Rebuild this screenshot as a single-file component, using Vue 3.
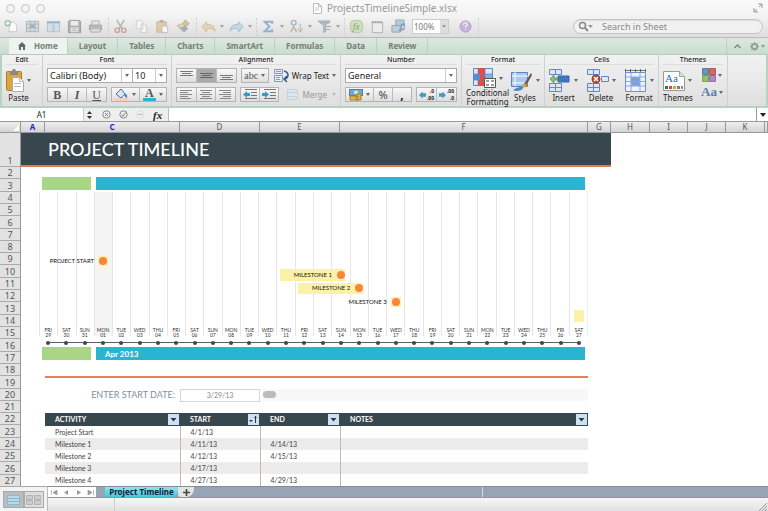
<script setup>
import { ref } from 'vue'

const tabs = ['Home', 'Layout', 'Tables', 'Charts', 'SmartArt', 'Formulas', 'Data', 'Review']
const activeTab = ref('Home')
const columns = ['A', 'C', 'D', 'E', 'F', 'G', 'H', 'I', 'J', 'K', '']
const rowNumbers = Array.from({ length: 27 }, (_, i) => i + 1)
const startDate = ref('3/29/13')
const scroll = ref(0)

const names = ['FRI', 'SAT', 'SUN', 'MON', 'TUE', 'WED', 'THU']
const days = Array.from({ length: 30 }, (_, i) => ({
  name: names[i % 7],
  date: String(i < 3 ? 29 + i : i - 2).padStart(2, '0'),
  today: i === 3
}))

const lanes = [
  { label: 'PROJECT START', from: 3, to: 3, dot: true },
  { label: 'MILESTONE 1', from: 13, to: 16, dot: true },
  { label: 'MILESTONE 2', from: 14, to: 17, dot: true },
  { label: 'MILESTONE 3', from: 19, to: 19, dot: true },
  { label: '', from: 29, to: 29, dot: false }
]
const span = (lane) => ({
  left: ((lane.from + 0.5) / 30) * 100 + '%',
  width: ((lane.to - lane.from) / 30) * 100 + '%'
})

const activities = [
  ['Project Start', '4/1/13', '', ''],
  ['Milestone 1', '4/11/13', '4/14/13', ''],
  ['Milestone 2', '4/12/13', '4/15/13', ''],
  ['Milestone 3', '4/17/13', '', ''],
  ['Milestone 4', '4/27/13', '4/29/13', '']
]
const headings = ['ACTIVITY', 'START', 'END', 'NOTES']
</script>

<template>
  <div class="window">
    <header class="titlebar">
      <div class="lights">
        <button aria-label="Close"></button><button aria-label="Minimize"></button><button aria-label="Zoom"></button>
      </div>
      <div class="title">
        <svg width="9" height="11" viewBox="0 0 9 11"><path d="M.5.500h5l3 3v7h-8zM5.500.500v3h3" fill="#fff" stroke="#bbb" /><path d="M2 5h4M2 7h4" stroke="#ccc" /></svg>
        <span>ProjectsTimelineSimple.xlsx</span>
      </div>
      <svg class="expand" width="12" height="12" viewBox="0 0 12 12" fill="none" stroke="#999"><path d="M6 2h4v4M10 2 7 5M2 6v4h4M2 10l3-3" /></svg>
    </header>

    <div class="toolbar">
      <div class="tools">
        <button aria-label="New"><svg viewBox="0 0 16 16"><path d="M5.500 3.500h5l3 3v7h-8z" fill="#fff" stroke="#c4c4c4" /><circle cx="4" cy="4.500" r="3.500" fill="#95bf99" /><path d="M4 2.500v4M2 4.500h4" stroke="#fff" stroke-width="1.500" /></svg></button>
        <button aria-label="Templates"><svg viewBox="0 0 16 16"><path d="M1.500 2.500h13v11h-13z" fill="#d8dcdf" stroke="#a4a7aa" /><path d="M1 5.500h14M5.500 3v10M10.500 3v10M2 9.500h12" stroke="#9ca5ad" /><path d="M6 6h4v3H6z" fill="#7aa6c5" /></svg></button>
        <button aria-label="Open"><svg viewBox="0 0 16 16"><path d="M1.500 3.500h6v10h-6zM8.500 3.500h6v10h-6z" fill="#cfdee8" stroke="#a3bfd1" /><path d="M1 3.500h14" stroke="#82a8c2" stroke-width="2" /></svg></button>
        <button aria-label="Save"><svg viewBox="0 0 16 16"><path d="M2.500 1.500h11l1 1v12h-13v-12z" fill="#a9a9a9" stroke="#8e8e8e" /><path d="M4 2h8v5H4zM4 9h8v5H4z" fill="#eee" /><path d="M5 10.500h6M5 12.500h6" stroke="#aaa" /></svg></button>
        <button aria-label="Print"><svg viewBox="0 0 16 16"><path d="M4 2h8v5H4z" fill="#e3e3e3" stroke="#aaa" /><path d="M1.500 6.500h13v5h-13z" fill="#b5b5b5" stroke="#999" /><path d="M3 10h10v4H3z" fill="#d9d9d9" stroke="#a6a6a6" /></svg></button>
      </div>
      <div class="tools">
        <button aria-label="Cut"><svg viewBox="0 0 16 16" fill="none"><path d="M4 1 10 11M12 1 6 11" stroke="#a9aaad" stroke-width="1.500" /><circle cx="4.500" cy="12" r="2.300" stroke="#c99794" stroke-width="1.500" /><circle cx="11.500" cy="12" r="2.300" stroke="#c99794" stroke-width="1.500" /></svg></button>
        <button aria-label="Copy"><svg viewBox="0 0 16 16" fill="#f5f5f5" stroke="#ccc"><path d="M2.500 1.500h5l2 2v7h-7zM7.500 5.500h4l2 2v7h-6z" /></svg></button>
        <button aria-label="Paste"><svg viewBox="0 0 16 16"><path d="M2 3h10v11H2z" fill="#dfc79c" stroke="#c5ab7e" /><path d="M5 1h4v3H5z" fill="#aaa" /><path d="M7.500 7.500h6v7h-6z" fill="#f7f7f7" stroke="#bbb" /></svg></button>
        <button aria-label="Format painter"><svg viewBox="0 0 16 16"><path d="m10 1 4 4-4 3-3-3z" fill="#d5bc82" stroke="#b39f73" /><path d="m1 7 6-2 5 5-4 4z" fill="#ead5aa" stroke="#c9b283" /><path d="M2 7q5 4 7-1l4 4-4 4z" fill="#94a6ba" /></svg></button>
      </div>
      <div class="tools">
        <button class="menu" aria-label="Undo"><svg viewBox="0 0 16 16"><path d="M1 8 6 3v3q8-1 9 7-4-5-9-2v3z" fill="#e3d4a7" stroke="#c5b68d" /></svg><i class="caret"></i></button>
        <button class="menu" aria-label="Redo"><svg viewBox="0 0 16 16"><path d="m15 8-5-5v3q-8-1-9 7 4-5 9-2v3z" fill="#bdd5e4" stroke="#91b5ce" /></svg><i class="caret"></i></button>
      </div>
      <div class="tools">
        <button class="menu" aria-label="AutoSum"><svg viewBox="0 0 16 16"><path d="M12 5V3H4l5 5-5 5h8v-2" fill="none" stroke="#88a9ca" stroke-width="2.200" /></svg><i class="caret"></i></button>
        <button class="menu" aria-label="Sort"><svg viewBox="0 0 16 16" fill="none"><circle cx="5" cy="4" r="2.500" stroke="#94aec7" stroke-width="1.500" /><path d="M2 14 5 8l3 6" stroke="#c0a993" stroke-width="1.500" /><path d="M12 5v8m-3-3 3 4 3-4" stroke="#aaa" /></svg><i class="caret"></i></button>
        <button class="menu" aria-label="Filter"><svg viewBox="0 0 16 16"><path d="M1 2h13L9 7v7H7V7z" fill="#a9bccc" stroke="#95a7b7" /><path d="M3 4h11M9 8h6M9 11h5" stroke="#999" /></svg><i class="caret"></i></button>
      </div>
      <div class="tools">
        <button aria-label="Formula builder"><svg viewBox="0 0 16 16"><rect x="1.500" y="1.500" width="13" height="13" rx="4" fill="#cbdcb9" stroke="#aac293" /><text x="4" y="11.500" font-size="9" font-style="italic" fill="#7c9d69">fx</text></svg></button>
        <button aria-label="Toolbox"><svg viewBox="0 0 16 16"><path d="M2.500 3.500h11v11h-11z" fill="#eee" stroke="#aaa" /><path d="M2 3.500h12" stroke="#999" stroke-width="2" stroke-dasharray="2 1" /></svg></button>
        <button aria-label="Media browser"><svg viewBox="0 0 16 16"><path d="M5 1h9v6H5z" fill="#a8c4d8" stroke="#86a5be" /><path d="M1 7h9v7H1z" fill="#b7cad7" stroke="#819bb0" /><path d="M11 12V6l3-1v6M11 12a1 1 0 1 1-1-1M14 11a1 1 0 1 1-1-1" fill="none" stroke="#63839e" /></svg></button>
        <div class="zoom"><select aria-label="Zoom level"><option>100%</option></select><b><i class="caret"></i></b></div>
      </div>
      <div class="tools">
        <button aria-label="Help"><svg viewBox="0 0 16 16"><circle cx="8" cy="8" r="6" fill="#c1aad2" stroke="#b295c9" /><path d="M6 6q0-2 2-2t2 2q0 1-2 2v1M8 11v1" fill="none" stroke="#fff" stroke-width="1.300" /></svg></button>
      </div>
      <div class="search">
        <svg width="16" height="11" viewBox="0 0 16 11"><circle cx="4.500" cy="4.500" r="3" fill="none" stroke="#888" stroke-width="1.500" /><path d="m7 7 3 3" stroke="#888" stroke-width="1.800" /><path d="M10 4h5l-2.500 3z" fill="#999" /></svg>
        <input type="search" aria-label="Search in Sheet" placeholder="Search in Sheet" />
      </div>
    </div>

    <nav class="tabs">
      <button v-for="tab in tabs" :key="tab" :class="{ active: tab === activeTab }" @click="activeTab = tab">
        <svg v-if="tab === 'Home'" width="8" height="8" viewBox="0 0 8 8"><path d="M4 0 0 4h1v4h2V5h2v3h2V4h1z" fill="#666" /></svg>{{ tab }}
      </button>
      <div class="tabtools">
        <button aria-label="Collapse ribbon"><svg width="9" height="7" viewBox="0 0 9 7"><path d="m1.500 5 3-3 3 3" fill="none" stroke="#888" stroke-width="1.500" /></svg></button>
        <button aria-label="Ribbon settings"><svg width="16" height="9" viewBox="0 0 16 9"><circle cx="4.500" cy="4.500" r="2.700" fill="none" stroke="#929b94" stroke-width="1.800" /><path d="M4.500 0v1.500M4.500 7.500V9M0 4.500h1.500M7.500 4.500H9M1.500 1.500l1 1M7.500 1.500l-1 1M1.500 7.500l1-1M7.500 7.500l-1-1" stroke="#929b94" /><path d="M11 3h4l-2 3z" fill="#999" /></svg></button>
      </div>
    </nav>

    <div class="ribbon">
      <section class="group edit">
        <h2>Edit</h2>
        <div class="bigs">
          <button class="big"><span><svg width="18" height="23" viewBox="0 0 18 23"><rect x=".5" y="2.500" width="15" height="19" rx="1" fill="#dba63e" stroke="#a87c2b" /><path d="M4 2h2l1-2h2l1 2h2v4H4z" fill="#888" /><path d="M6.500 8.500h7l4 4v10h-11z" fill="#fff" stroke="#aaa" /><path d="M13.500 8.500v4h4M8 14.500h7M8 17.500h7" fill="none" stroke="#bbb" /></svg><i class="caret"></i></span>Paste</button>
        </div>
      </section>

      <section class="group font">
        <h2>Font</h2>
        <div class="line">
          <div class="combo grow"><select aria-label="Font name"><option>Calibri (Body)</option></select><i class="caret"></i></div>
          <div class="combo size"><select aria-label="Font size"><option>10</option></select><i class="caret"></i></div>
        </div>
        <div class="line gap">
          <div class="seg w60"><button class="serif">B</button><button class="serif it">I</button><button class="serif un">U</button></div>
          <div class="seg w56">
            <button aria-label="Fill color"><svg width="15" height="13" viewBox="0 0 15 13"><path d="m2 6 5-5 4 5-4 4z" fill="#d9e5ef" stroke="#4b7196" /><path d="M10 5q4 1 3 5-2 0-3-4" fill="#4c88b8" /><path d="M1 11.500h13" stroke="#f2cfc0" stroke-width="3" /></svg><i class="caret"></i></button>
            <button class="serif" aria-label="Font color"><span class="inked">A</span><i class="caret"></i></button>
          </div>
        </div>
      </section>

      <section class="group align">
        <h2>Alignment</h2>
        <div class="line gap">
          <div class="seg w61">
            <button aria-label="Align top"><svg width="13" height="11" viewBox="0 0 13 11"><path d="M0 1.500h13M2 3.500h9M0 5.500h13" stroke="#777" /></svg></button>
            <button class="on" aria-label="Align middle"><svg width="13" height="11" viewBox="0 0 13 11"><path d="M0 3.500h13M2 5.500h9M0 7.500h13" stroke="#666" /></svg></button>
            <button aria-label="Align bottom"><svg width="13" height="11" viewBox="0 0 13 11"><path d="M0 5.500h13M2 7.500h9M0 9.500h13" stroke="#777" /></svg></button>
          </div>
          <div class="seg w28"><button class="abc">abc<i class="caret"></i></button></div>
          <button class="flat"><svg width="15" height="14" viewBox="0 0 15 14"><path d="M.5.500h8v4h-8zM.5 6.500h8v6h-8z" fill="#e6eef7" stroke="#7b9bc6" /><path d="M2 2.500h5M2 8.500h4M2 10.500h4" stroke="#ca8576" /><path d="M10 2q4 1 4 4t-3 4M13 7l-3 3 3 3" fill="none" stroke="#375b98" stroke-width="1.500" /></svg>Wrap Text<i class="caret"></i></button>
        </div>
        <div class="line gap">
          <div class="seg w61">
            <button aria-label="Align left"><svg width="12" height="11" viewBox="0 0 12 11"><path d="M0 1.500h12M0 3.500h8M0 5.500h12M0 7.500h8M0 9.500h11" stroke="#888" /></svg></button>
            <button aria-label="Center"><svg width="12" height="11" viewBox="0 0 12 11"><path d="M0 1.500h12M2 3.500h8M0 5.500h12M2 7.500h8M0 9.500h12" stroke="#888" /></svg></button>
            <button aria-label="Align right"><svg width="12" height="11" viewBox="0 0 12 11"><path d="M0 1.500h12M4 3.500h8M0 5.500h12M4 7.500h8M1 9.500h11" stroke="#888" /></svg></button>
          </div>
          <div class="seg w40">
            <button aria-label="Decrease indent"><svg width="14" height="11" viewBox="0 0 14 11"><path d="M2 .5h12M8 3.500h6M8 6.500h6M2 9.500h12" stroke="#777" /><path d="M0 5.500 4 2v2h3v3H4v2z" fill="#3f97c9" /></svg></button>
            <button aria-label="Increase indent"><svg width="14" height="11" viewBox="0 0 14 11"><path d="M2 .5h12M8 3.500h6M8 6.500h6M2 9.500h12" stroke="#777" /><path d="M7 5.500 3 2v2H0v3h3v2z" fill="#3f97c9" /></svg></button>
          </div>
          <button class="flat dim"><svg width="11" height="11" viewBox="0 0 11 11"><path d="M.5.500h10v10H.5zM0 3.500h11M0 7.500h11" fill="#dbe6ed" stroke="#c2d2dc" /></svg>Merge<i class="caret"></i></button>
        </div>
      </section>

      <section class="group number">
        <h2>Number</h2>
        <div class="line"><div class="combo grow"><select aria-label="Number format"><option>General</option></select><i class="caret"></i></div></div>
        <div class="line gap">
          <div class="seg w67">
            <button class="wide" aria-label="Currency"><svg width="14" height="13" viewBox="0 0 14 13"><rect x=".5" y="1.500" width="13" height="6" fill="#71a9cd" stroke="#4c81a8" /><circle cx="7" cy="4.500" r="2" fill="#d6e9f4" /><path d="M1 8h8v4H1zM7 6h5v6H7z" fill="#e3b84a" stroke="#a57f29" /></svg><i class="caret"></i></button>
            <button class="pct">%</button><button class="comma">,</button>
          </div>
          <div class="seg w41">
            <button class="dec" aria-label="Increase decimal"><svg width="7" height="8" viewBox="0 0 8 8"><path d="M0 4 4 0v2h4v4H4v2z" fill="#4797c5" /></svg><span>.0<br />.00</span></button>
            <button class="dec" aria-label="Decrease decimal"><svg width="7" height="8" viewBox="0 0 8 8"><path d="M8 4 4 0v2H0v4h4v2z" fill="#4797c5" /></svg><span>.00<br />.0</span></button>
          </div>
        </div>
      </section>

      <section class="group format">
        <h2>Format</h2>
        <div class="bigs">
          <button class="big two"><span><svg width="23" height="20" viewBox="0 0 23 20"><path d="M.5.500h19v17h-19z" fill="#dbe7f8" stroke="#6688bd" /><path d="M5 0h7v18H5z" fill="#e34c43" /><path d="M0 6h7v6H0z" fill="#568ed3" /><path d="M12 6h7v6h-7z" fill="#86afe3" /><path d="M0 6h20M0 12h20M5 0v18M12 0v18" stroke="#6485b7" stroke-width=".7" /><path d="M11.500 10.500h11v9h-11z" fill="#fff" stroke="#555" /><path d="M13 13h3m2 0h3M13 17h3m2 0h3" stroke="#444" /></svg><i class="caret"></i></span>Conditional<br />Formatting</button>
          <button class="big"><span><svg width="23" height="22" viewBox="0 0 23 22"><path d="M1.500 2.500h16v14h-16z" fill="#a9c9f1" stroke="#5d82bb" /><path d="M2 6h16M2 13h16M5 2v14" stroke="#fff" /><path d="m21 3-7 11 2 2 6-11z" fill="#76563a" /><path d="m14 13-3 5 5-1 1-2z" fill="#d79d32" /><path d="M3 20q7-4 10-3 0 4-7 4z" fill="#4b83cd" /></svg><i class="caret"></i></span>Styles</button>
        </div>
      </section>

      <section class="group cells">
        <h2>Cells</h2>
        <div class="bigs">
          <button class="big"><span><svg width="22" height="23" viewBox="0 0 22 23"><path d="M.5.500h6v5h-6zM6.500.500h6v5h-6zM.5 14.500h6v4h-6zM6.500 14.500h6v4h-6zM.5 18.500h6v4h-6zM6.500 18.500h6v4h-6z" fill="#dce7f9" stroke="#6486c1" /><path d="M9 7h11v6H9z" fill="#3f76c5" stroke="#3867a9" /><path d="M5 6 1 10l4 4v-3h4V9H5z" fill="#7cc878" stroke="#458e44" stroke-width=".7" /></svg><i class="caret"></i></span>Insert</button>
          <button class="big"><span><svg width="22" height="23" viewBox="0 0 22 23"><path d="M.5.500h6v5h-6zM6.500.500h6v5h-6zM.5 14.500h6v4h-6zM6.500 14.500h6v4h-6zM.5 18.500h6v4h-6zM6.500 18.500h6v4h-6zM14.500 7.500h7v5h-7z" fill="#dce7f9" stroke="#6486c1" /><circle cx="9" cy="10" r="4" fill="#c05138" stroke="#983921" /><path d="m7 8 4 4M11 8l-4 4" stroke="#fff" stroke-width="1.400" /></svg><i class="caret"></i></span>Delete</button>
          <button class="big"><span><svg width="23" height="23" viewBox="0 0 23 23"><path d="M1.500 3.500h20v19h-20z" fill="#eef3fc" stroke="#6c8fce" /><path d="M7 8h9v9H7z" fill="#7ba0e0" /><path d="M2 8h19M2 12.500h19M2 17h19M7 4v18M16 4v18" stroke="#8da9dc" /><path d="M1 1.500h21M1.500 0v3M6.500 0v3M11.500 0v3M16.500 0v3M21.500 0v3" stroke="#444" stroke-width=".7" /></svg><i class="caret"></i></span>Format</button>
        </div>
      </section>

      <section class="group themes">
        <h2>Themes</h2>
        <div class="bigs">
          <button class="big"><span><svg width="22" height="20" viewBox="0 0 22 20"><path d="M.5.500h16l5 5v14h-21z" fill="#fff" stroke="#999" /><path d="M16.500.500v5h5" fill="#dbe6ca" stroke="#9aaa88" /><text x="2" y="11" font-size="11" font-family="Liberation Serif" fill="#3569a9">Aa</text><path d="M2 15h3v3H2z" fill="#50637e" /><path d="M6 15h3v3H6z" fill="#d64c45" /><path d="M10 15h3v3h-3z" fill="#e39d32" /><path d="M14 15h3v3h-3z" fill="#8a6fb2" /><path d="M18 15h2v3h-2z" fill="#70a844" /></svg><i class="caret"></i></span>Themes</button>
          <div class="stack">
            <button aria-label="Theme colors"><svg width="14" height="14" viewBox="0 0 14 14"><path d="M.5.500h6v6h-6z" fill="#7095b9" stroke="#587c9f" /><path d="M7.500.500h6v6h-6z" fill="#d46a69" stroke="#b35757" /><path d="M.5 7.500h6v6h-6z" fill="#8dc568" stroke="#73a553" /><path d="M7.500 7.500h6v6h-6z" fill="#b486cb" stroke="#9568ad" /></svg><i class="caret"></i></button>
            <button aria-label="Theme fonts"><span class="aa">Aa</span><i class="caret"></i></button>
          </div>
        </div>
      </section>
    </div>

    <div class="formula">
      <input class="cellname" aria-label="Name box" value="A1" />
      <svg class="step" width="5" height="8" viewBox="0 0 5 8"><path d="M0 3 2.500 0 5 3zM0 5h5L2.500 8z" fill="#333" /></svg>
      <div class="fxtools">
        <button aria-label="Cancel"><svg width="9" height="9" viewBox="0 0 9 9"><circle cx="4.500" cy="4.500" r="3.700" fill="none" stroke="#888" /><path d="m3 3 3 3M6 3 3 6" stroke="#888" /></svg></button>
        <button aria-label="Enter"><svg width="9" height="9" viewBox="0 0 9 9"><circle cx="4.500" cy="4.500" r="3.700" fill="none" stroke="#888" /><path d="m2.500 4.500 1.500 2 2.500-4" fill="none" stroke="#888" /></svg></button>
        <button aria-label="More"><svg width="9" height="9" viewBox="0 0 9 9"><circle cx="4.500" cy="4.500" r="3.700" fill="none" stroke="#ddd" /><path d="M2 4.500h5" stroke="#bbb" /></svg></button>
        <button class="fx">fx</button>
      </div>
      <input class="entry" aria-label="Formula" />
      <button class="drop" aria-label="Expand formula bar"><i class="caret dark"></i></button>
    </div>

    <div class="colheads">
      <div class="corner"><svg width="6" height="6" viewBox="0 0 6 6"><path d="M6 0v6H0z" fill="#fff" /></svg></div>
      <div v-for="(c, i) in columns" :key="i" :class="{ sel: i < 2 }">{{ c }}</div>
    </div>

    <main class="sheet">
      <div class="rownums"><div v-for="n in rowNumbers" :key="n"><span>{{ n }}</span></div></div>
      <h1 class="banner">PROJECT TIMELINE</h1>

      <div class="chart">
        <div class="bars"><div class="prev"></div><div class="month"></div></div>
        <div class="plot">
          <div class="stripes"><div v-for="(d, i) in days" :key="i" :class="{ today: d.today }"></div></div>
          <div class="lanes">
            <div v-for="(lane, i) in lanes" :key="i" class="lane">
              <div class="span" :class="{ point: lane.from === lane.to, block: !lane.dot }" :style="span(lane)">
                <span>{{ lane.label }}</span><i v-if="lane.dot" class="dot"></i>
              </div>
            </div>
          </div>
          <div class="days"><div v-for="(d, i) in days" :key="i">{{ d.name }}<br />{{ d.date }}</div></div>
        </div>
        <div class="axis"><i v-for="(d, i) in days" :key="i"></i></div>
        <div class="bars"><div class="prev"></div><div class="month">Apr 2013</div></div>
      </div>

      <hr class="rule" />
      <label class="datelabel" for="start">ENTER START DATE:</label>
      <input id="start" v-model="startDate" class="dateinput" type="text" />
      <input v-model="scroll" class="slider" type="range" aria-label="Scroll timeline" />

      <div class="tablebox">
        <table>
          <thead>
            <tr>
              <th v-for="(h, i) in headings" :key="h"><div>{{ h }}<button :aria-label="'Filter ' + h"><svg width="9" height="9" viewBox="0 0 9 9"><path v-if="i !== 1" d="M1.500 3h6l-3 3.500z" fill="#263842" /><path v-else d="M0 5h4L2 7zM6 1h1v7H6zM5 3l1.500-2L8 3z" fill="#263842" /></svg></button></div></th>
            </tr>
          </thead>
          <tbody>
            <tr v-for="row in activities" :key="row[0]"><td v-for="(cell, i) in row" :key="i">{{ cell }}</td></tr>
          </tbody>
        </table>
      </div>
    </main>

    <footer>
      <div class="views">
        <button class="on" aria-label="Normal view"><svg width="13" height="10" viewBox="0 0 13 10"><path d="M.5.500h12v9H.5zM1 3.500h11M1 6.500h11" fill="#b9d9e8" stroke="#8db9cd" /></svg></button>
        <button aria-label="Page layout view"><svg width="15" height="10" viewBox="0 0 15 10"><path d="M.5.500h6v4h-6zM8.500.500h6v4h-6zM.5 5.500h6v4h-6zM8.500 5.500h6v4h-6z" fill="#ccc" stroke="#b4b4b4" /></svg></button>
      </div>
      <div class="bottom">
        <div class="sheets">
          <div class="nav">
            <button aria-label="First sheet"><svg width="7" height="5" viewBox="0 0 7 5"><path d="M.5 0v5M6 0 2 2.500 6 5z" fill="#999" stroke="#999" stroke-width=".7" /></svg></button>
            <button aria-label="Previous sheet"><svg width="7" height="5" viewBox="0 0 7 5"><path d="M5 0 1 2.500 5 5z" fill="#999" /></svg></button>
            <button aria-label="Next sheet"><svg width="7" height="5" viewBox="0 0 7 5"><path d="m2 0 4 2.500L2 5z" fill="#999" /></svg></button>
            <button aria-label="Last sheet"><svg width="7" height="5" viewBox="0 0 7 5"><path d="M6.500 0v5M1 0l4 2.500L1 5z" fill="#999" stroke="#999" stroke-width=".7" /></svg></button>
          </div>
          <button class="tab">Project Timeline</button>
          <button class="add" aria-label="Add sheet"><svg width="7" height="7" viewBox="0 0 7 7"><path d="M3.500 0v7M0 3.500h7" stroke="#444" stroke-width="1.600" /></svg></button>
          <div class="track"></div>
        </div>
        <div class="status"><div></div><svg width="8" height="8" viewBox="0 0 8 8"><path d="M0 8 8 0M3 8l5-5M6 8l2-2" stroke="#999" /></svg></div>
      </div>
    </footer>
  </div>
</template>

<style>
body { margin: 0; }
</style>

<style scoped>
* { box-sizing: border-box; }
.window { height: 100vh; display: flex; flex-direction: column; overflow: hidden; background: #fff; font-family: "Noto Sans", sans-serif; font-size: 8px; line-height: 10px; color: #222; }
button, input, select { font: inherit; color: inherit; border: 0; padding: 0; margin: 0; background: none; border-radius: 0; outline: 0; }
button { display: flex; align-items: center; justify-content: center; white-space: nowrap; }
select { appearance: none; }
svg { flex: none; display: block; }
.caret { width: 0; height: 0; flex: none; border: 2px solid transparent; border-top: 3px solid #666; border-bottom: 0; }
.caret.dark { border-top-color: #222; }

.titlebar { flex: none; height: 16px; display: flex; align-items: center; justify-content: space-between; padding: 0 4px 0 6px; background: linear-gradient(#fafafa, #f3f3f3); }
.lights { display: flex; gap: 6px; width: 60px; }
.lights button { width: 9px; height: 9px; border-radius: 50%; border: 1px solid #c2c2c2; background: #f4f4f4; }
.title { display: flex; align-items: center; gap: 5px; font-size: 10px; color: #999; }
.expand { margin-left: 48px; }

.toolbar { flex: none; height: 22px; display: flex; align-items: center; background: linear-gradient(#f3f3f3, #dedede); border-bottom: 1px solid #bbb; padding: 0 5px 0 1px; }
.tools { display: flex; align-items: center; padding-right: 2px; margin-right: 1px; border-right: 1px dotted #ccc; }
.tools:nth-of-type(5) { border: 0; }
.tools button { width: 21px; height: 18px; opacity: .85; }
.tools button svg { width: 15px; height: 15px; }
.tools .menu { width: 28px; gap: 4px; }
.tools .caret { border-top-color: #999; }
.zoom { display: flex; width: 37px; height: 15px; margin: 0 3px; border: 1px solid #ccc; background: #fff; color: #777; }
.zoom select { width: 27px; height: 13px; line-height: 13px; padding-left: 1px; font-size: 8px; }
.zoom b { flex: 1; display: flex; align-items: center; justify-content: center; background: #ddd; }
.search { margin-left: auto; width: 190px; height: 15px; border: 1px solid #c4c4c4; border-radius: 8px; display: flex; align-items: center; background: #f1f1f1; padding-left: 4px; box-shadow: inset 0 1px 1px #ddd; }
.search input { flex: 1; min-width: 0; padding-left: 8px; font-size: 9px; }
.search input::placeholder { color: #888; opacity: 1; }

.tabs { flex: none; height: 17px; display: flex; background: linear-gradient(#dce8de, #c9ddcf); border-bottom: 1px solid #b5ccbb; padding-left: 9px; font-weight: 700; color: #777d78; }
.tabs > button { padding: 0 11px; border-right: 1px solid #bcd2c2; gap: 8px; }
.tabs > .active { padding: 0 9px; background: #edf3ee; }
.tabtools { margin-left: auto; display: flex; width: 42px; border-left: 1px solid #bdd0c2; }
.tabtools button { flex: 1; }

.ribbon { flex: none; height: 53px; display: flex; background: linear-gradient(#f2f2f2, #dfdfdf); border: solid #b8d2c0; border-width: 0 2px 2px; }
.group { flex: none; border-right: 1px solid #d0d0d0; padding: 0 4px; }
.group h2 { margin: 0 0 3px; height: 10px; font-size: 7px; line-height: 10px; font-weight: 500; text-align: center; border-bottom: 1px solid #ddd; }
.edit { width: 41px; }
.font { width: 129px; }
.align { width: 169px; }
.number { width: 121px; }
.format { width: 83px; }
.cells { width: 114px; }
.themes { width: 69px; }
.line { display: flex; height: 16px; margin-bottom: 3px; }
.line.gap { gap: 4px; }
.combo { display: flex; align-items: center; background: #fff; border: 1px solid #aaa; height: 15px; padding-right: 3px; }
.combo select { flex: 1; min-width: 0; height: 13px; line-height: 13px; padding-left: 2px; font-size: 9px; border-right: 1px solid #ccc; margin-right: 3px; }
.grow { flex: 1; }
.size { width: 35px; margin-left: -1px; }
.seg { display: flex; height: 15px; border: 1px solid #b4b4b4; background: linear-gradient(#f8f8f8, #dedede); }
.seg button { flex: 1; gap: 3px; }
.seg button + button { border-left: 1px solid #bbb; }
.seg .on { background: #aaa; }
.w60 { width: 60px; }
.w56 { width: 56px; }
.w61 { width: 61px; }
.w28 { width: 28px; }
.w40 { width: 40px; }
.w67 { width: 67px; }
.w41 { width: 41px; }
.seg .wide { flex: 0 0 27px; }
.serif { font-family: "Liberation Serif", serif; font-size: 12px; font-weight: 700; color: #555; }
.it { font-style: italic; }
.un { text-decoration: underline; font-weight: 400; }
.inked { border-bottom: 3px solid #2fb0cc; width: 13px; line-height: 9px; }
.abc { font-family: "Liberation Serif", serif; font-size: 10px; color: #555; }
.flat { gap: 3px; margin-left: 1px; height: 15px; }
.dim { color: #999; gap: 5px; margin-left: 4px; }
.dim .caret { border-top-color: #bbb; }
.pct { font-size: 11px; color: #444; }
.comma { font-weight: 700; font-size: 12px; }
.dec { font-size: 5px; line-height: 7px; font-weight: 700; text-align: right; }
.seg .dec { gap: 1px; }
.bigs { display: flex; justify-content: space-between; }
.big { flex-direction: column; justify-content: flex-start; line-height: 10px; }
.big > span { display: flex; align-items: center; gap: 3px; height: 25px; }
.two > span { height: 20px; }
.two { line-height: 9px; font-size: 8px; }
.stack { display: flex; flex-direction: column; gap: 5px; }
.stack button { gap: 2px; }
.aa { font-family: "Liberation Serif", serif; font-size: 13px; font-weight: 700; color: #557fae; }

.formula { flex: none; height: 14px; display: flex; align-items: center; background: #eee; border-bottom: 1px solid #999; }
.cellname { width: 84px; height: 13px; background: #fff; text-align: center; border-right: 1px solid #ccc; }
.step { margin: 0 10px 0 3px; }
.fxtools { display: flex; gap: 8px; width: 66px; }
.fx { font-family: "Liberation Serif", serif; font-size: 11px; font-weight: 700; font-style: italic; }
.entry { flex: 1; height: 13px; background: #fff; border-left: 1px solid #bbb; }
.drop { width: 12px; height: 13px; background: #fff; border-left: 1px solid #999; }
.drop .caret { border-width: 4px 3px 0; }

.colheads { flex: none; height: 11px; display: grid; grid-template-columns: 21px 24px 135px 80px 80px 1fr 23px 39px 38px 38px 39px 3px; background: linear-gradient(#eee, #d4d4d4); border-bottom: 1px solid #999; color: #555; }
.colheads div { text-align: center; line-height: 10px; border-right: 1px solid #999; }
.colheads .sel { color: #2a1fd0; font-weight: 700; }
.colheads .corner { display: flex; justify-content: flex-end; align-items: flex-end; padding: 1px; }

.sheet { flex: 1; min-height: 0; margin-bottom: -1px; display: grid; grid-template-columns: 21px 24px 135px 80px 80px 1fr 23px 39px 38px 38px 39px 3px; grid-template-rows: 34px repeat(26, minmax(0, 1fr)); font-family: Lato, sans-serif; font-size: 7px; }
.rownums { grid-area: 1 / 1 / -1 / 2; display: grid; grid-template-rows: 34px repeat(26, minmax(0, 1fr)); font-family: "Noto Sans", sans-serif; font-size: 9px; color: #555; background: #e2e2e2; border-right: 1px solid #999; }
.rownums div { display: flex; align-items: flex-end; justify-content: center; border-bottom: 1px solid #aaa; min-height: 0; line-height: 11px; }
.banner { grid-area: 1 / 2 / 2 / 8; margin: 0; padding-left: 27px; background: #38464d; border-bottom: 2px solid #e87650; color: #fff; font-size: 18px; line-height: 32px; font-weight: 500; }
.chart { grid-area: 2 / 2 / 18 / 7; padding: 10px 0 4px 18px; display: flex; flex-direction: column; }
.bars { flex: none; height: 13px; display: flex; gap: 5px; padding: 0 3px; }
.prev { width: 49px; background: #a9d684; }
.month { flex: 1; background: #29b5d2; color: #fff; font-weight: 700; font-size: 8px; line-height: 15px; padding-left: 9px; }
.plot { flex: 1; position: relative; display: flex; flex-direction: column; }
.stripes { position: absolute; inset: 2px 0 3px; display: grid; grid-template-columns: repeat(30, 1fr); border-right: 1px solid #eee; }
.stripes div { border-left: 1px solid #e6e6e6; }
.stripes .today { background: #f4f4f4; }
.lanes { position: relative; flex: 1; padding: 64px 0 5px; display: flex; flex-direction: column; }
.lane { flex: 1; position: relative; }
.span { position: absolute; top: 1px; bottom: 1px; display: flex; align-items: center; justify-content: flex-end; white-space: nowrap; color: #111; font-size: 6px; }
.span::before { content: ""; position: absolute; inset: 0 -4px 0 -6px; background: #fcf1a6; }
.span.point::before { inset: 1px -5px; }
.span.block::before { inset: 0 -5px; }
.span span { position: relative; margin-right: 9px; }
.dot { position: absolute; right: -4px; width: 8px; height: 8px; border-radius: 50%; background: #f8853c; }
.days { position: relative; display: grid; grid-template-columns: repeat(30, 1fr); height: 11px; font-size: 5px; line-height: 5px; text-align: center; color: #333; }
.axis { flex: none; height: 8px; display: grid; grid-template-columns: repeat(30, 1fr); align-items: center; justify-items: center; background: linear-gradient(#566169, #566169) 9px 50% / calc(100% - 18px) 1px no-repeat; }
.axis i { width: 4px; height: 4px; border-radius: 50%; background: #3c474e; }
.rule { grid-area: 19 / 3 / 20 / 7; margin: 0; border: 0; width: 100%; height: 2px; background: #e8805f; align-self: start; }
.datelabel { grid-area: 20 / 2 / 21 / 4; align-self: center; text-align: right; padding-right: 5px; color: #7c919f; font-size: 9px; }
.dateinput { grid-area: 20 / 4 / 21 / 5; width: 100%; height: 13px; border: 1px solid #d5d5d5; text-align: center; color: #888; }
.slider { grid-area: 20 / 5 / 21 / 7; appearance: none; width: calc(100% - 2px); height: 12px; margin-left: 2px; padding-left: 1px; background: #f7f7f7; }
.slider::-webkit-slider-thumb { appearance: none; width: 13px; height: 7px; border-radius: 4px; background: #bbb; }
.tablebox { grid-area: 22 / 3 / 28 / 7; min-height: 0; }
table { width: 100%; border-collapse: collapse; table-layout: fixed; line-height: 9px; color: #444; }
th:nth-child(1) { width: 135px; }
th:nth-child(2), th:nth-child(3) { width: 80px; }
th, td { padding: 0 0 0 10px; text-align: left; }
th { height: 13px; background: #38464d; color: #fff; font-size: 7px; }
th div { display: flex; align-items: center; justify-content: space-between; }
th button { width: 11px; height: 11px; margin-right: 1px; background: #cde1f2; }
td { height: 12px; border-right: 1px solid #bbb; }
td:last-child { border: 0; }
tbody tr:nth-child(even) { background: #eeebeb; }

footer { flex: none; height: 25px; display: flex; position: relative; background: #eee; }
.views { width: 48px; padding: 4px 3px; display: flex; background: #f3f3f3; border-top: 1px solid #aaa; border-right: 1px solid #bbb; }
.views button { flex: 1; height: 17px; border: 1px solid #aaa; background: #ddd; }
.views .on { background: #b7bdc1; }
.bottom { flex: 1; display: flex; flex-direction: column; }
.sheets { height: 12px; display: flex; background: #96a4b6; border-top: 1px solid #858d97; border-bottom: 1px solid #9a9096; }
.nav { width: 48px; display: flex; background: #fff; }
.nav button { flex: 1; }
.tab { margin-left: 9px; width: 73px; height: 10px; background: linear-gradient(#8fe4ec, #3ecbdc); border-radius: 0 0 7px 2px; color: #123; font-weight: 700; }
.add { width: 16px; height: 10px; background: #e4e4e4; border-radius: 0 0 8px 3px; }
.track { width: 289px; border-right: 1px solid #ddd; }
.status { flex: 1; display: flex; justify-content: space-between; align-items: flex-end; background: linear-gradient(#f6f6f6, #e2e2e2); padding-right: 1px; }
.status div { width: 67px; height: 100%; border-right: 1px solid #ccc; }
</style>
